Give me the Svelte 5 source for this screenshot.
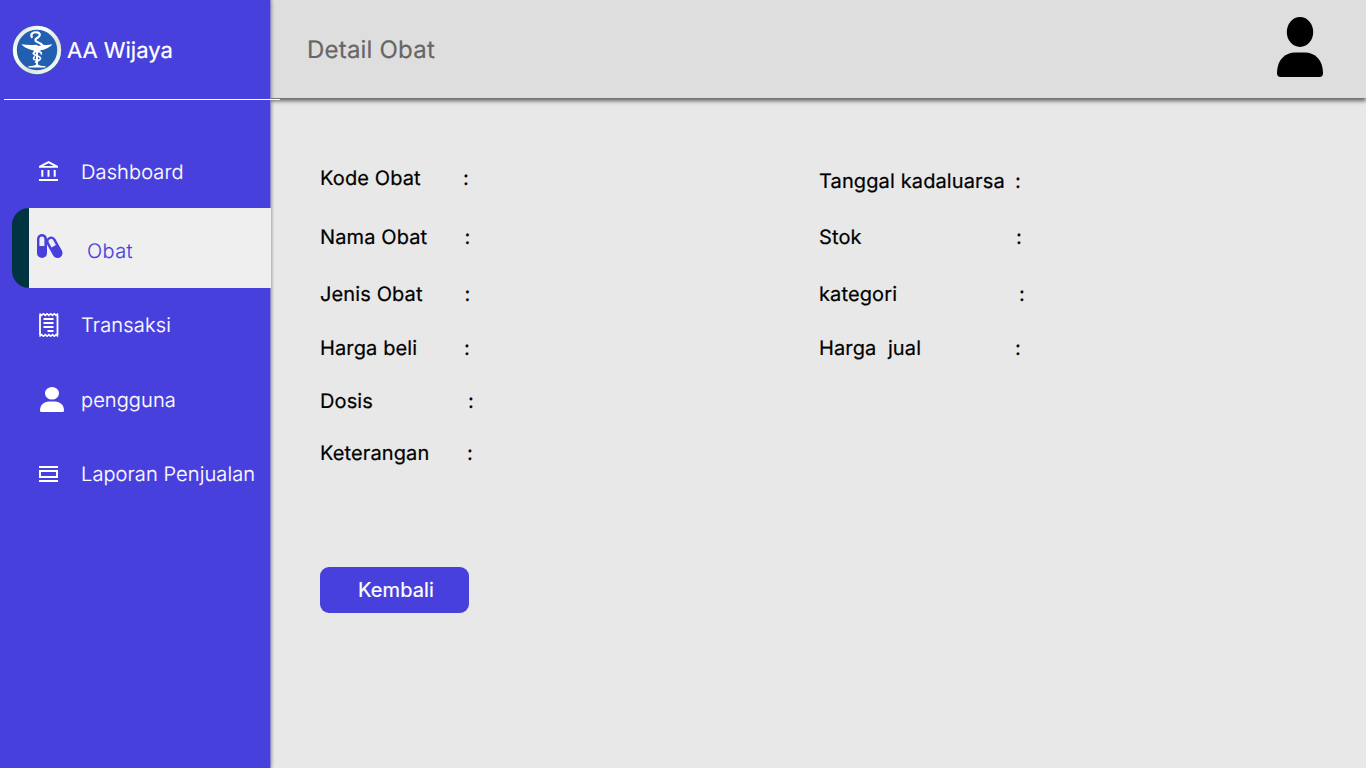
<script>
  const left = [
    { label: 'Kode Obat', w: 143 },
    { label: 'Nama Obat', w: 144.4 },
    { label: 'Jenis Obat', w: 144.4 },
    { label: 'Harga beli', w: 144 },
    { label: 'Dosis', w: 148 },
    { label: 'Keterangan', w: 147 },
  ];
  const right = [
    { label: 'Tanggal kadaluarsa', w: 196 },
    { label: 'Stok', w: 197 },
    { label: 'kategori', w: 200 },
    { label: 'Harga  jual', w: 196 },
  ];
</script>

<div class="page">
  <aside>
    <div class="brand">
      <svg class="logo" width="50" height="50" viewBox="0 0 50 50">
        <defs>
          <linearGradient id="rim" x1="0" y1="0" x2="1" y2="1">
            <stop offset="0" stop-color="#d5d5d2" />
            <stop offset=".3" stop-color="#fff" />
            <stop offset=".65" stop-color="#e2e2df" />
            <stop offset="1" stop-color="#fff" />
          </linearGradient>
        </defs>
        <circle cx="25" cy="25" r="24.8" fill="#2b5eaf" />
        <circle cx="25" cy="25" r="22.2" fill="#235fb0" stroke="url(#rim)" stroke-width="4" />
        <path d="M9.500 19.300Q17 20.600 24 19.800L27 21L31 19.800Q36 20.300 40.500 19.300C37 23.500 32 24.500 28.500 25.500L26 27V39.500Q28 41 33.500 41.300V42.500H16.500V41.300Q22 41 24 39.500V27L21.500 25.500C17 24 13 23.500 9.500 19.300Z" fill="#fff" />
        <path d="M19.800 12C18.300 9 21 7 24.500 7.300C28.500 7.700 28.500 10.300 26.500 12C24 13.700 22.500 14.500 24 16.200C26 18 30.500 18.200 30.500 21.200C30.500 24.500 22 25.500 21.500 28.500" fill="none" stroke="#fff" stroke-width="2.200" stroke-linecap="round" />
        <path d="M21.500 28.500C22 31 29 30.500 28.500 33.500C28 36 23.500 35.800 23.500 38M24.500 27.500C26.500 26 30.500 27 29 29.500M23 31.500C20.800 32.500 21 35 24 35" fill="none" stroke="#fff" stroke-width="1.700" />
      </svg>
      <span>AA Wijaya</span>
    </div>
    <nav>
      <a class="dash"><svg width="20" height="20" viewBox="0 0 20 20" fill="#fff"><path fill-rule="evenodd" d="M0 5L9.500 0L19 5V6.800H0ZM4.300 5H14.700L9.500 2.300ZM2.300 9H4.300V15.700H2.300ZM8.500 9H10.500V15.700H8.500ZM14.700 9H16.700V15.700H14.700ZM0 18H19V20H0Z" /></svg><span>Dashboard</span></a>
      <a class="active"><svg width="26" height="26" viewBox="0 0 26 26"><rect x="0" y="1" width="10" height="24" rx="5" fill="#4840dd" /><path d="M2.400 13V6.500a2.500 2.900 0 0 1 5 0V13Z" fill="#efefef" /><g transform="rotate(-29 17.500 14)"><rect x="12.200" y="2.700" width="10" height="23" rx="5" fill="#4840dd" /><path d="M14.700 13V7.500a2.500 2.500 0 0 1 5 0V13Z" fill="#efefef" /></g></svg><span>Obat</span></a>
      <a class="trans"><svg width="20" height="24" viewBox="0 0 20 24"><path d="M1 1.800V22.200M18.500 1.800V22.200" stroke="#fff" stroke-width="1.800" /><path d="M.5 .5L2.500 2.400L4.500 .7L6.300 2.400L8.100 .7L9.900 2.400L11.700 .7L13.500 2.400L15.300 .7L17.100 2.400L19 .5M.5 23.500L2.500 21.600L4.500 23.300L6.300 21.600L8.100 23.300L9.900 21.600L11.700 23.300L13.500 21.600L15.300 23.300L17.100 21.600L19 23.500" fill="none" stroke="#fff" stroke-width="1.500" /><path d="M4.500 6H14.500M4.500 10H14.500M4.500 14H14.500M8.500 18H14.500" stroke="#fff" stroke-width="1.800" /></svg><span>Transaksi</span></a>
      <a class="user"><svg width="24" height="25" viewBox="0 0 24 25" fill="#fff"><ellipse cx="12" cy="6.300" rx="7" ry="6.300" /><path d="M0 23.500C0 18 4 14.500 9 14.500H15C20 14.500 24 18 24 23.500Q24 25 22.500 25H1.500Q0 25 0 23.500Z" /></svg><span>pengguna</span></a>
      <a class="report"><svg width="19" height="16" viewBox="0 0 19 16"><path d="M0 1H19M0 15H19" stroke="#fff" stroke-width="2" /><rect x="1" y="5" width="17" height="6" fill="none" stroke="#fff" stroke-width="2" /></svg><span>Laporan Penjualan</span></a>
    </nav>
  </aside>
  <div class="main">
    <header>
      <h1>Detail Obat</h1>
      <svg width="46" height="60" viewBox="0 0 46 60"><ellipse cx="23" cy="15" rx="13.200" ry="15" /><path d="M0 56C0 43 8 35.500 18 35.500H28C38 35.500 46 43 46 56Q46 60 42.500 60H3.500Q0 60 0 56Z" /></svg>
    </header>
    <main>
      <div class="details">
        <dl>
          {#each left as r}
            <div class="row"><dt style:width="{r.w}px">{r.label}</dt><dd>:</dd></div>
          {/each}
        </dl>
        <dl class="second">
          {#each right as r}
            <div class="row"><dt style:width="{r.w}px">{r.label}</dt><dd>:</dd></div>
          {/each}
        </dl>
      </div>
      <button>Kembali</button>
    </main>
  </div>
</div>

<style>
  :global(body) { margin: 0; overflow: hidden; }
  .page { display: flex; width: 1366px; height: 768px; background: #e8e8e8; font-family: Inter, sans-serif; font-size: 20px; line-height: 24px; text-rendering: geometricPrecision; -webkit-text-stroke: .22px currentColor; }
  aside { position: relative; z-index: 2; width: 270px; flex: none; background: #4840dd; box-shadow: 1px 0 0 #8883cb, 2px 0 3px rgba(0,0,0,.3); }
  .brand { display: flex; align-items: center; height: 100px; box-sizing: border-box; margin-left: 4px; padding: 2px 0 0 8px; width: 276px; border-bottom: 1px solid #fff; color: #fff; font-size: 22px; font-weight: 400; }
  .brand svg { margin-bottom: 1px; }
  .brand span { margin-left: 5px; white-space: nowrap; }
  nav { display: flex; flex-direction: column; padding-top: 36px; -webkit-text-stroke: .15px currentColor; }
  nav a { display: flex; align-items: center; box-sizing: border-box; height: 72px; color: #fff; font-weight: 300; letter-spacing: .1px; padding-left: 39px; white-space: nowrap; }
  nav svg { flex: none; }
  nav .dash { letter-spacing: .13px; }
  .dash svg { margin-bottom: 2px; }
  .dash span { margin-left: 22px; }
  nav .active { height: 80px; width: 259px; margin-left: 12px; background: #efefef; color: #4840dd; border-left: 17px solid #003440; border-radius: 17px 0 0 17px; padding-left: 8px; letter-spacing: .4px; }
  .active svg { margin-bottom: 4px; }
  .active span { margin: 6px 0 0 24px; }
  nav .trans { height: 74px; letter-spacing: .2px; }
  .trans span { margin-left: 22px; }
  nav .user { height: 76px; padding-left: 40px; }
  .user svg { margin-bottom: 2px; }
  .user span { margin-left: 17px; }
  .report span { margin-left: 23px; }
  .main { flex: 1; min-width: 0; }
  header { display: flex; justify-content: space-between; align-items: center; box-sizing: border-box; height: 98px; padding: 0 43px 4px 37px; background: #dedede; box-shadow: 0 3px 4px rgba(0,0,0,.57); }
  h1 { margin: 6px 0 0; font-size: 24px; line-height: 30px; font-weight: 400; letter-spacing: .2px; color: #666; }
  main { padding: 68px 50px 0; }
  .details { display: grid; grid-template-columns: 499px 1fr; height: 401px; }
  dl { display: grid; grid-template-rows: 59px 57px 54px 53px 52px 24px; align-content: start; margin: 0; }
  .second { grid-template-rows: 56px 57px 54px 24px; padding-top: 3px; }
  .row { display: flex; font-weight: 400; letter-spacing: .12px; color: #000; }
  dt { white-space: pre; }
  dd { margin: 0; }
  button { display: block; width: 149px; height: 46px; border: 0; border-radius: 9px; background: #4840dd; color: #fff; font: 400 20px Inter, sans-serif; letter-spacing: .15px; padding: 0 0 0 3px; }
</style>
